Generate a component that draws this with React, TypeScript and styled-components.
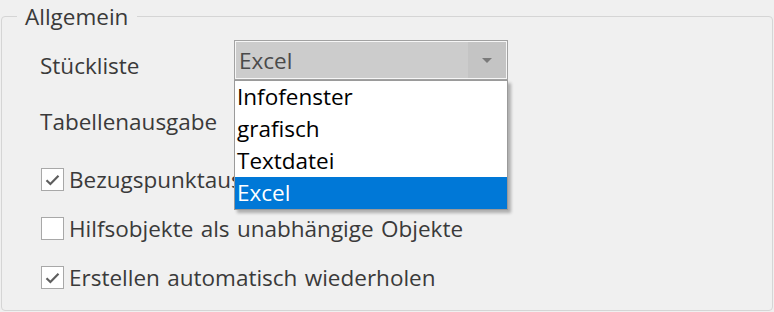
import React from 'react';
import styled, { createGlobalStyle } from 'styled-components';

const Global = createGlobalStyle`
  html, body { margin: 0; padding: 0; background: #f0f0f0; }
  body { font-family: "Open Sans", "Liberation Sans", sans-serif; }
`;

const Page = styled.div`
  width: 774px;
  height: 312px;
  box-sizing: border-box;
  padding: 1px 1px 1px 1px;
  overflow: hidden;
`;

const Group = styled.fieldset`
  margin: 0;
  padding: 0;
  min-width: 0;
  width: 772px;
  height: 310px;
  box-sizing: border-box;
  border: 1px solid #d5d5d5;
  border-radius: 4px;
`;

const Legend = styled.legend`
  position: relative;
  top: 1px;
  margin-left: 15px;
  padding: 0 9px 0 8px;
  font-size: 22.5px;
  line-height: 30px;
  color: #3a3a3a;
`;

const Body = styled.div`
  display: flex;
  flex-direction: column;
  padding-left: 38px;
  color: #3a3a3a;
  font-size: 22.5px;
  word-spacing: 1.5px;
`;

const FieldRow = styled.div<{ $top: number }>`
  display: flex;
  align-items: center;
  height: 40px;
  margin-top: ${(p) => p.$top}px;
`;

const Label = styled.div<{ $shift?: number }>`
  width: 194px;
  line-height: 30px;
  position: relative;
  top: ${(p) => p.$shift ?? 0}px;
`;

const SelectWrap = styled.div`
  position: relative;
  width: 274px;
  height: 40px;
`;

const SelectBox = styled.div`
  display: flex;
  height: 100%;
  box-sizing: border-box;
  border: 1px solid #a2a2a2;
  box-shadow: inset 0 0 0 1px #f6f6f6;
  background: #cccccc;
  padding: 1px;
`;

const SelectValue = styled.div`
  flex: 1;
  display: flex;
  align-items: center;
  padding: 2px 0 0 3px;
  color: #4a4a4a;
  line-height: 30px;
`;

const ArrowCell = styled.div`
  width: 38px;
  display: flex;
  align-items: center;
  justify-content: center;
  background: #c4c4c4;
`;

const Arrow = styled.span`
  width: 0;
  height: 0;
  border-left: 5px solid transparent;
  border-right: 5px solid transparent;
  border-top: 5px solid #7a7a7a;
`;

const List = styled.ul`
  position: absolute;
  left: 0;
  top: 40px;
  width: 274px;
  margin: 0;
  padding: 0;
  list-style: none;
  box-sizing: border-box;
  border: 1px solid #9a9a9a;
  background: #ffffff;
  box-shadow: 3px 3px 3px rgba(0, 0, 0, 0.28);
  z-index: 2;
`;

const Option = styled.li<{ $selected?: boolean }>`
  height: 32px;
  line-height: 32px;
  padding-left: 2px;
  color: ${(p) => (p.$selected ? '#ffffff' : '#000000')};
  background: ${(p) => (p.$selected ? '#0078d7' : 'transparent')};
`;

const CheckRow = styled.div<{ $top?: number }>`
  display: flex;
  align-items: center;
  gap: 5px;
  height: 49px;
  margin-top: ${(p) => p.$top ?? 0}px;
  padding-left: 1px;
`;

const Box = styled.span`
  width: 23px;
  height: 23px;
  box-sizing: border-box;
  border: 1px solid #a8a8a8;
  background: #ffffff;
  display: flex;
  align-items: center;
  justify-content: center;
  flex-shrink: 0;
`;

const CheckText = styled.span`
  line-height: 30px;
  white-space: nowrap;
`;

const Check = () => (
  <svg width="15" height="12" viewBox="0 0 15 12">
    <path d="M1.5 6.2 L5.4 10 L13.5 1.8" fill="none" stroke="#5e5e5e" strokeWidth="2.2" />
  </svg>
);

const Checkbox = ({ checked, label, top }: { checked: boolean; label: string; top?: number }) => (
  <CheckRow $top={top}>
    <Box>{checked && <Check />}</Box>
    <CheckText>{label}</CheckText>
  </CheckRow>
);

const options = ['Infofenster', 'grafisch', 'Textdatei', 'Excel'];

export default function App() {
  return (
    <>
      <Global />
      <Page>
        <Group>
          <Legend>Allgemein</Legend>
          <Body>
            <FieldRow $top={9}>
              <Label $shift={6}>Stückliste</Label>
              <SelectWrap>
                <SelectBox>
                  <SelectValue>Excel</SelectValue>
                  <ArrowCell>
                    <Arrow />
                  </ArrowCell>
                </SelectBox>
                <List>
                  {options.map((o) => (
                    <Option key={o} $selected={o === 'Excel'}>
                      {o}
                    </Option>
                  ))}
                </List>
              </SelectWrap>
            </FieldRow>
            <FieldRow $top={22}>
              <Label>Tabellenausgabe</Label>
            </FieldRow>
            <Checkbox checked label="Bezugspunktauswahl" top={13} />
            <Checkbox checked={false} label="Hilfsobjekte als unabhängige Objekte" />
            <Checkbox checked label="Erstellen automatisch wiederholen" />
          </Body>
        </Group>
      </Page>
    </>
  );
}
